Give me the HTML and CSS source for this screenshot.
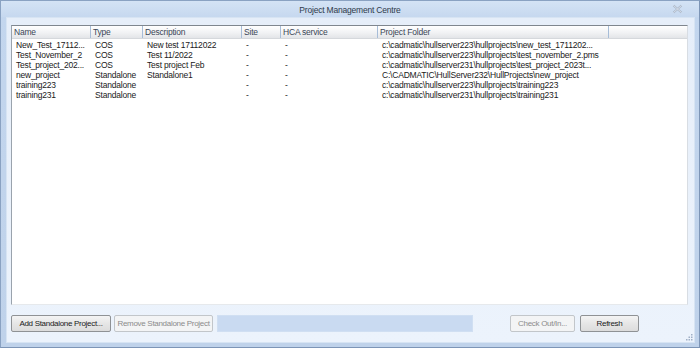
FILE: index.html
```html
<!DOCTYPE html>
<html>
<head>
<meta charset="utf-8">
<link rel="stylesheet" href="styles.css">
</head>
<body>
<div class="window">
  <div class="titlebar">
    <span></span>
    <span class="title">Project Management Centre</span>
    <span class="close-wrap">
      <svg class="close" width="11" height="10" viewBox="0 0 11 10">
        <path d="M1.5 1.5 L9.5 8.5 M9.5 1.5 L1.5 8.5" stroke="#a9b6c8" stroke-width="2" fill="none"/>
        <path d="M1.5 1.5 L9.5 8.5 M9.5 1.5 L1.5 8.5" stroke="#e8eef6" stroke-width="0.7" fill="none"/>
      </svg>
    </span>
  </div>
  <div class="client">
    <div class="list">
      <div class="header cols">
        <div class="hc">Name</div>
        <div class="hc">Type</div>
        <div class="hc">Description</div>
        <div class="hc">Site</div>
        <div class="hc">HCA service</div>
        <div class="hc">Project Folder</div>
        <div class="hc last"></div>
      </div>
      <div class="row cols">
        <div class="c">New_Test_17112...</div><div class="c">COS</div><div class="c">New test 17112022</div><div class="c">-</div><div class="c">-</div><div class="c">c:\cadmatic\hullserver223\hullprojects\new_test_1711202...</div><div></div>
      </div>
      <div class="row cols">
        <div class="c">Test_November_2</div><div class="c">COS</div><div class="c">Test 11/2022</div><div class="c">-</div><div class="c">-</div><div class="c">c:\cadmatic\hullserver223\hullprojects\test_november_2.pms</div><div></div>
      </div>
      <div class="row cols">
        <div class="c">Test_project_202...</div><div class="c">COS</div><div class="c">Test project Feb</div><div class="c">-</div><div class="c">-</div><div class="c">c:\cadmatic\hullserver231\hullprojects\test_project_2023t...</div><div></div>
      </div>
      <div class="row cols">
        <div class="c">new_project</div><div class="c">Standalone</div><div class="c">Standalone1</div><div class="c">-</div><div class="c">-</div><div class="c">C:\CADMATIC\HullServer232\HullProjects\new_project</div><div></div>
      </div>
      <div class="row cols">
        <div class="c">training223</div><div class="c">Standalone</div><div class="c"></div><div class="c">-</div><div class="c">-</div><div class="c">c:\cadmatic\hullserver223\hullprojects\training223</div><div></div>
      </div>
      <div class="row cols">
        <div class="c">training231</div><div class="c">Standalone</div><div class="c"></div><div class="c">-</div><div class="c">-</div><div class="c">c:\cadmatic\hullserver231\hullprojects\training231</div><div></div>
      </div>
    </div>
    <div class="toolbar">
      <button class="btn btn-add">Add Standalone Project...</button>
      <button class="btn btn-remove" disabled>Remove Standalone Project</button>
      <div class="progress"></div>
      <div class="spacer"></div>
      <button class="btn btn-check" disabled>Check Out/In...</button>
      <button class="btn btn-refresh">Refresh</button>
    </div>
    <svg class="grip" width="7" height="7" viewBox="0 0 7 7">
      <rect x="5" y="0" width="1.5" height="1.5" fill="#9fb0c6"/>
      <rect x="2.5" y="2.5" width="1.5" height="1.5" fill="#9fb0c6"/>
      <rect x="5" y="2.5" width="1.5" height="1.5" fill="#9fb0c6"/>
      <rect x="0" y="5" width="1.5" height="1.5" fill="#9fb0c6"/>
      <rect x="2.5" y="5" width="1.5" height="1.5" fill="#9fb0c6"/>
      <rect x="5" y="5" width="1.5" height="1.5" fill="#9fb0c6"/>
    </svg>
  </div>
</div>
</body>
</html>
```

FILE: styles.css
```css
html, body {
  margin: 0;
  padding: 0;
}
body {
  width: 700px;
  height: 348px;
  overflow: hidden;
  font-family: "Liberation Sans", Arial, sans-serif;
  font-size: 8.5px;
  letter-spacing: -0.2px;
  color: #1a1a1a;
}
.window {
  box-sizing: border-box;
  width: 700px;
  height: 348px;
  display: flex;
  flex-direction: column;
  background: linear-gradient(#c3d6ee, #bfd2ea);
  border: 1px solid #8aa2c2;
  border-right-color: #7d95b6;
  border-bottom-color: #7d95b6;
}
.titlebar {
  height: 16px;
  display: grid;
  grid-template-columns: 1fr auto 1fr;
  align-items: center;
  background: linear-gradient(#d4e3f5, #c6d8ef);
}
.title {
  color: #2e3a4a;
  font-size: 8.5px;
  padding-top: 1px;
}
.close-wrap {
  display: flex;
  justify-content: flex-end;
  padding-right: 16px;
}
.close {
  display: block;
}
.client {
  position: relative;
  flex: 1;
  margin: 0 4px 4px 5px;
  padding: 7px 6px 0 4px;
  background: linear-gradient(#e6eef9, #ecf3fc);
  border: 1px solid #d7e4f3;
  display: flex;
  flex-direction: column;
}
.list {
  box-sizing: border-box;
  height: 280px;
  background: #fff;
  border: 1px solid #9aa3ad;
  border-top-color: #7f868e;
  border-right-color: #d8dde3;
  border-bottom-color: #e6e9ec;
}
.cols {
  display: grid;
  grid-template-columns: 79px 52px 99px 39px 97px 231px 1fr;
}
.header {
  height: 12px;
  background: linear-gradient(#ffffff, #f1f2f4 55%, #e3e5e8);
  border-bottom: 1px solid #d5d8dc;
  margin-bottom: 1px;
}
.hc {
  box-sizing: border-box;
  border-right: 1px solid #a7bdd8;
  padding-left: 2px;
  line-height: 12px;
  color: #3b4656;
  white-space: nowrap;
  overflow: hidden;
}
.hc.last {
  border-right: none;
}
.row {
  height: 10px;
}
.c {
  padding-left: 4px;
  line-height: 10px;
  white-space: nowrap;
  overflow: visible;
}
.toolbar {
  display: flex;
  align-items: center;
  margin-top: 10px;
  gap: 3px;
}
.btn {
  box-sizing: border-box;
  height: 17px;
  padding: 0;
  white-space: nowrap;
  font-family: "Liberation Sans", Arial, sans-serif;
  font-size: 8px;
  letter-spacing: -0.3px;
  color: #1a1a1a;
  border: 1px solid #8f9295;
  border-radius: 2px;
  background: linear-gradient(#f4f4f4, #e6e6e6 50%, #dcdcdc);
}
.btn:disabled {
  color: #8b8b8b;
  border-color: #c2c6ca;
  background: #f3f4f5;
}
.btn-add {
  width: 100px;
}
.btn-remove {
  width: 99px;
}
.progress {
  margin-left: 1px;
  width: 256px;
  height: 17px;
  background: #c9daf1;
  border: 1px solid #d0dff2;
  box-sizing: border-box;
}
.spacer {
  flex: 1;
}
.btn-check {
  width: 65px;
}
.btn-refresh {
  width: 59px;
  margin-left: 2px;
  margin-right: 49px;
}
.grip {
  position: absolute;
  right: 1px;
  bottom: 1px;
}
```
